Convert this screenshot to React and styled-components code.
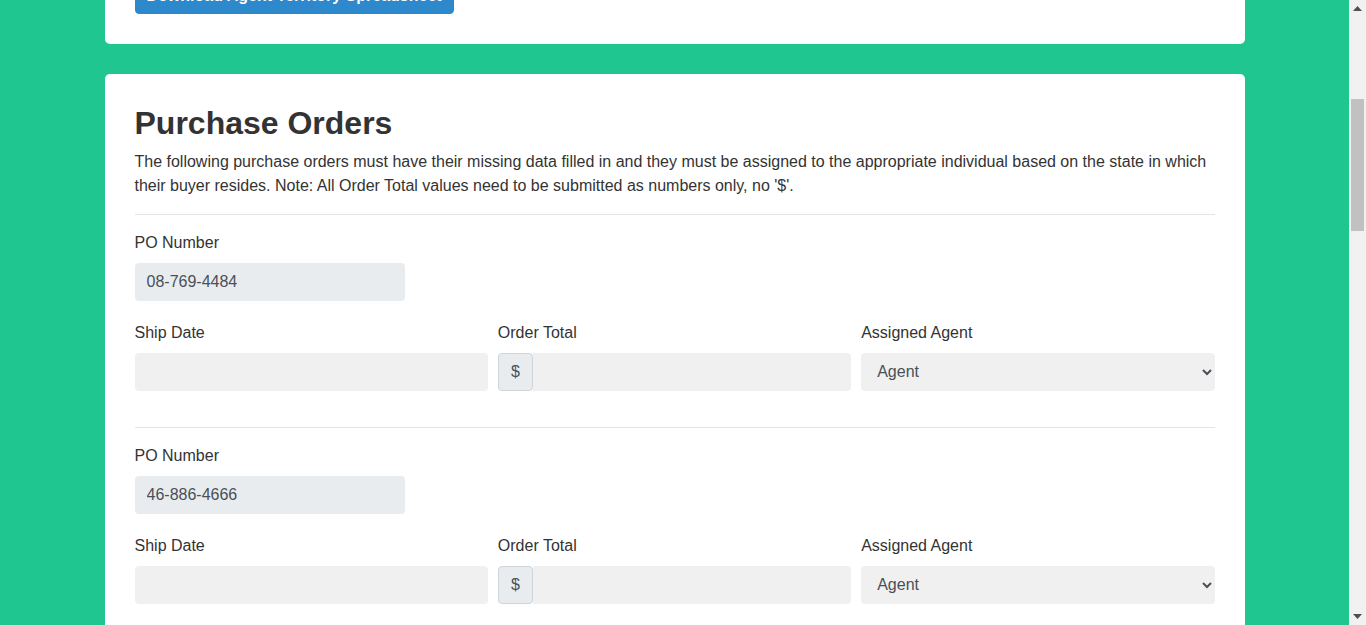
import React, { useLayoutEffect, useRef, useState } from 'react';
import styled, { createGlobalStyle } from 'styled-components';

const GlobalStyle = createGlobalStyle`
  *, *::before, *::after { box-sizing: border-box; }
  html { background: #20c68f; scroll-behavior: auto; }
  body {
    margin: 0;
    padding-right: 17px;
    background: #20c68f;
    font-family: "Liberation Sans", Arial, sans-serif;
    font-size: 16px;
    line-height: 1.5;
    color: #333333;
  }
`;

const Container = styled.div`
  max-width: 1140px;
  margin: 0 auto;
  padding: 30px 0;
  display: flex;
  flex-direction: column;
  gap: 30px;
`;

const Card = styled.section`
  background: #ffffff;
  border-radius: 5px;
  padding: 30px;
`;

const Title = styled.h2`
  margin: 0 0 7px;
  font-size: 32px;
  line-height: 1.2;
  font-weight: 700;
  color: #333333;
`;

const Text = styled.p`
  margin: 0 0 16px;
  color: #333333;
`;

const Hint = styled.p`
  margin: 0 0 7px;
  font-size: 14px;
  line-height: 20px;
  color: #666666;
`;

const Button = styled.button`
  display: inline-block;
  font-family: inherit;
  font-size: 16px;
  font-weight: 700;
  line-height: 24px;
  color: #ffffff;
  background: #2d88cc;
  border: 1px solid #2d88cc;
  border-radius: 4px;
  padding: 7px 11px 5px;
  cursor: pointer;
`;

const Divider = styled.hr`
  border: 0;
  border-top: 1px solid #e4e4e4;
  margin: 0 0 16px;
`;

const Order = styled.div`
  display: flex;
  flex-direction: column;
`;

const Group = styled.div`
  display: flex;
  flex-direction: column;
  width: ${p => p.$width || 'auto'};
  margin-bottom: 20px;
`;

const Row = styled.div`
  display: grid;
  grid-template-columns: repeat(3, 1fr);
  column-gap: 10px;
  margin-bottom: 36px;
`;

const Cell = styled.div`
  display: flex;
  flex-direction: column;
  min-width: 0;
`;

const Label = styled.label`
  display: block;
  margin-bottom: 8px;
  color: #333333;
`;

const Input = styled.input`
  display: block;
  width: 100%;
  min-width: 0;
  height: 38px;
  padding: 7px 12px;
  font-family: inherit;
  font-size: 16px;
  line-height: 24px;
  color: #495057;
  background: ${p => (p.$locked ? '#e9ecef' : '#f0f0f0')};
  border: 0;
  border-radius: ${p => (p.$joined ? '0 4px 4px 0' : '4px')};
  outline: none;
`;

const InputGroup = styled.div`
  display: flex;
  align-items: stretch;
  height: 38px;
`;

const Prepend = styled.span`
  display: flex;
  align-items: center;
  justify-content: center;
  width: 35px;
  flex: 0 0 35px;
  color: #495057;
  background: #e9ecef;
  border: 1px solid #ced4da;
  border-radius: 4px;
`;

const Select = styled.select`
  display: block;
  width: 100%;
  height: 38px;
  padding: 7px 11px 7px 12px;
  font-family: inherit;
  font-size: 16px;
  line-height: 24px;
  color: #495057;
  background: #f0f0f0;
  border: 0;
  border-radius: 4px;
  outline: none;
`;

/* fake browser scrollbar, laid over the right edge of the window */
const ScrollTrack = styled.div`
  position: fixed;
  top: 0;
  right: 0;
  width: 17px;
  height: 100vh;
  background: #f1f1f1;
  display: flex;
  flex-direction: column;
  justify-content: space-between;
  z-index: 10;
`;

const ScrollArrow = styled.div`
  height: 17px;
  display: flex;
  align-items: center;
  justify-content: center;
  color: #505050;
`;

const ScrollThumb = styled.div`
  position: absolute;
  left: 2px;
  right: 2px;
  background: #c1c1c1;
`;

const orders = [
  '08-769-4484',
  '46-886-4666',
  '53-201-7794',
  '71-345-9021',
  '19-552-3380',
  '64-917-2245',
  '32-408-6671',
  '85-123-5509',
  '27-690-1148',
  '90-274-8836',
];

function OrderBlock({ po }) {
  return (
    <Order>
      <Divider />
      <Group $width="270px">
        <Label>PO Number</Label>
        <Input $locked readOnly value={po} />
      </Group>
      <Row>
        <Cell>
          <Label>Ship Date</Label>
          <Input readOnly value="" />
        </Cell>
        <Cell>
          <Label>Order Total</Label>
          <InputGroup>
            <Prepend>$</Prepend>
            <Input $joined readOnly value="" />
          </InputGroup>
        </Cell>
        <Cell>
          <Label>Assigned Agent</Label>
          <Select defaultValue="Agent">
            <option>Agent</option>
          </Select>
        </Cell>
      </Row>
    </Order>
  );
}

export default function App() {
  const poRef = useRef(null);
  const [thumb, setThumb] = useState({ top: 99, height: 132 });

  useLayoutEffect(() => {
    const update = () => {
      const doc = document.documentElement;
      const viewH = window.innerHeight;
      const docH = doc.scrollHeight;
      const trackH = viewH - 34;
      const height = Math.max(20, (viewH / docH) * trackH);
      const max = Math.max(1, docH - viewH);
      const top = 17 + (window.scrollY / max) * (trackH - height);
      setThumb({ top, height });
    };
    if (poRef.current) {
      const top = poRef.current.getBoundingClientRect().top + window.scrollY;
      window.scrollTo(0, top - 74);
    }
    update();
    window.addEventListener('scroll', update);
    return () => window.removeEventListener('scroll', update);
  }, []);

  return (
    <>
      <GlobalStyle />
      <Container>
        <Card>
          <Title>Agent Territories</Title>
          <Text>
            Each agent is responsible for the purchase orders of buyers who reside in the
            states that make up their territory. Use the spreadsheet below to look up which
            agent covers each state before assigning the purchase orders on this page.
          </Text>
          <Text>
            The spreadsheet lists every agent together with the full list of states in their
            territory. Territories do not overlap, so every state belongs to exactly one agent.
          </Text>
          <Text>
            Look up the ship date and order total for each purchase order in the tracking
            system, enter them below, and then choose the agent responsible for the state in
            which the buyer resides.
          </Text>
          <Text>
            When every purchase order has been completed, submit the form at the bottom of
            the page.
          </Text>
          <Hint>The spreadsheet is updated whenever territories change.</Hint>
          <Button type="button">Download Agent Territory Spreadsheet</Button>
        </Card>
        <Card ref={poRef}>
          <Title>Purchase Orders</Title>
          <Text>
            The following purchase orders must have their missing data filled in and they must
            be assigned to the appropriate individual based on the state in which their buyer
            resides. Note: All Order Total values need to be submitted as numbers only, no '$'.
          </Text>
          {orders.map(po => (
            <OrderBlock key={po} po={po} />
          ))}
        </Card>
      </Container>
      <ScrollTrack>
        <ScrollArrow>
          <svg width="9" height="5" viewBox="0 0 9 5">
            <path d="M0 5 L4.5 0 L9 5 Z" fill="currentColor" />
          </svg>
        </ScrollArrow>
        <ScrollThumb style={{ top: thumb.top, height: thumb.height }} />
        <ScrollArrow>
          <svg width="9" height="5" viewBox="0 0 9 5">
            <path d="M0 0 L9 0 L4.5 5 Z" fill="currentColor" />
          </svg>
        </ScrollArrow>
      </ScrollTrack>
    </>
  );
}
